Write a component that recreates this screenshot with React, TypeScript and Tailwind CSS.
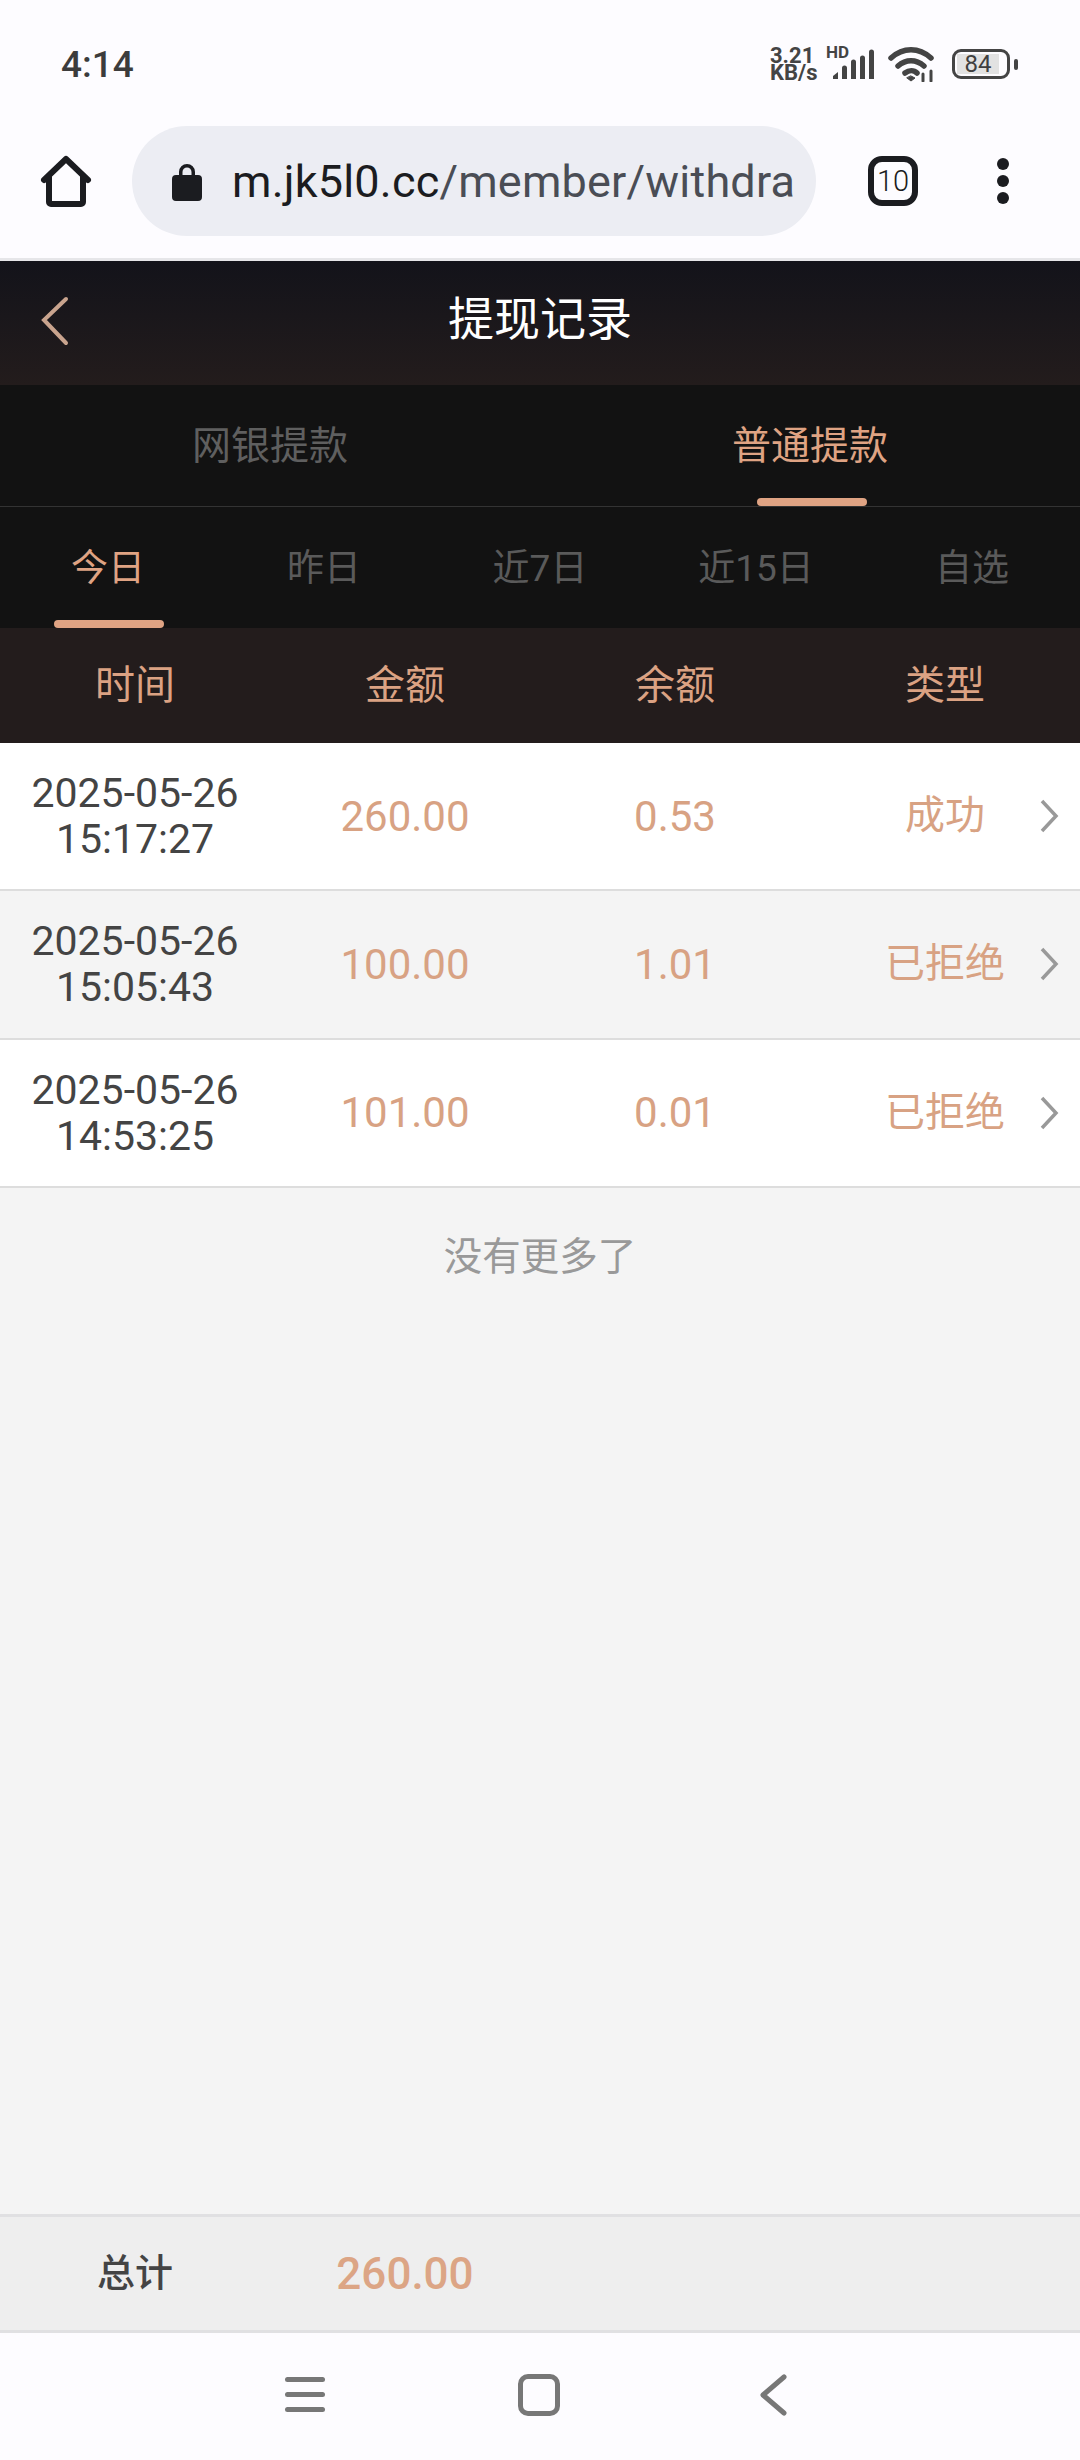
import React from 'react'

const records = [
	{ date: '2025-05-26', time: '15:17:27', amount: '260.00', balance: '0.53', status: '成功', bg: 'bg-white' },
	{ date: '2025-05-26', time: '15:05:43', amount: '100.00', balance: '1.01', status: '已拒绝', bg: 'bg-[#f4f4f4]' },
	{ date: '2025-05-26', time: '14:53:25', amount: '101.00', balance: '0.01', status: '已拒绝', bg: 'bg-white' },
]

const days = ['今日', '昨日', '近7日', '近15日', '自选']
const columns = ['时间', '金额', '余额', '类型']

function StatusBar() {
	return (
		<div className="h-[126px] pt-[2px] pl-[61px] flex items-center bg-[#fdfcff] text-[#3c3c3c]">
			<span className="text-[37px] font-medium leading-none">4:14</span>
			<div className="ml-auto mr-[62px] flex items-center">
				<div className="w-[52px] pl-[1px] text-[22px] font-bold leading-[17px] text-[#444]">
					<div>3.21</div>
					<div>KB/s</div>
				</div>
				<svg width="56" height="34" viewBox="0 0 56 34" className="ml-[2px]" fill="#444">
					<path d="M10 32v-3l5-4v7zM19 32v-11a2.500 2.500 0 0 1 5 0v11zM28 32v-17a2.500 2.500 0 0 1 5 0v17zM37 32v-21a2.500 2.500 0 0 1 5 0v21zM46 32v-27a2.500 2.500 0 0 1 5 0v27z" />
				</svg>
				<svg width="50" height="36" viewBox="0 0 50 36" className="ml-[9px]" fill="none" stroke="#444" strokeWidth="5.500" strokeLinecap="round">
					<path d="M3 12c12-11 28-11 40 0" />
					<path d="M10 20c8-7 18-7 26 0" />
					<path d="M17 27c4-3 9-3 12 0" />
					<path d="M19 32l4 3 4-3-4-2z" fill="#444" strokeWidth="1" />
					<path d="M35 35v-7M43 35v-10" strokeWidth="3" />
				</svg>
				<div className="ml-[14px] w-[58px] h-[30px] rounded-[9px] border-[3px] border-[#444] p-[2px] flex">
					<div className="w-[42px] bg-[#e2e2e2] text-[24px] leading-[20px] text-center text-[#3f3f3f]">84</div>
				</div>
				<div className="ml-[4px] w-[4px] h-[11px] rounded-full bg-[#444]" />
			</div>
			<span className="absolute left-[826px] top-[44px] text-[17px] font-bold leading-none text-[#444]">HD</span>
		</div>
	)
}

function BrowserBar() {
	return (
		<div className="h-[135px] bg-[#fdfcff] border-b-[3px] border-[#e6e6e9] flex items-start">
			<svg width="54" height="54" viewBox="0 0 54 54" className="ml-[39px] mt-[29px]" fill="none" stroke="#1b1c20" strokeWidth="6" strokeLinejoin="round" strokeLinecap="round">
				<path d="M5 25L27 4l22 21" />
				<path d="M10 22v25a2 2 0 0 0 2 2h30a2 2 0 0 0 2-2V22" />
			</svg>
			<div className="ml-[39px] w-[684px] h-[110px] rounded-full bg-[#ecedf3] flex items-center pl-[40px] pr-[24px]">
				<svg width="30" height="40" viewBox="0 0 30 40" fill="#1b1c20" className="shrink-0">
					<path d="M4 14h3v-3a8 8 0 0 1 16 0v3h3a4 4 0 0 1 4 4v18a4 4 0 0 1-4 4H4a4 4 0 0 1-4-4V18a4 4 0 0 1 4-4zM10.500 14h9v-3a4.500 4.500 0 0 0-9 0z" />
				</svg>
				<div className="ml-[30px] whitespace-nowrap text-[45px] tracking-[0.2px] leading-none">
					<span className="text-[#1b1c20]">m.jk5l0.cc</span>
					<span className="text-[#4a4d55]">/member/withdra</span>
				</div>
			</div>
			<div className="ml-[52px] mt-[30px] w-[50px] h-[50px] rounded-[14px] border-[6px] border-[#1b1c20] flex items-center justify-center text-[29px] font-light leading-none text-[#1b1c20]">
				10
			</div>
			<div className="ml-[79px] mt-[32px] flex flex-col gap-[5px]">
				<div className="w-[12px] h-[12px] rounded-full bg-[#1b1c20]" />
				<div className="w-[12px] h-[12px] rounded-full bg-[#1b1c20]" />
				<div className="w-[12px] h-[12px] rounded-full bg-[#1b1c20]" />
			</div>
		</div>
	)
}

function Chevron() {
	return (
		<svg width="20" height="34" viewBox="0 0 20 34" fill="none" stroke="#999" strokeWidth="3.500" className="absolute right-[21px] top-1/2 -translate-y-1/2">
			<path d="M3 2l14 15L3 32" />
		</svg>
	)
}

export default function App() {
	return (
		<div className="relative w-[1080px] h-[2460px] flex flex-col bg-[#f4f4f4] font-['Roboto','Noto_Sans_CJK_SC',sans-serif]">
			<StatusBar />
			<BrowserBar />

			<div className="h-[124px] bg-gradient-to-b from-[#13131a] to-[#231c1c] relative flex items-center justify-center pb-[8px]">
				<svg width="30" height="50" viewBox="0 0 30 50" fill="none" stroke="#c9a48e" strokeWidth="4" strokeLinecap="round" className="absolute left-[40px] top-[35px]">
					<path d="M26 3L4 24l22 23" />
				</svg>
				<span className="text-[46px] text-white">提现记录</span>
			</div>

			<div className="h-[122px] bg-[#121212] border-b border-[#333] grid grid-cols-2 text-[39px] text-center">
				<div className="pt-[2px] flex items-center justify-center text-[#5f5f5f]">网银提款</div>
				<div className="relative pt-[2px] flex items-center justify-center text-[#dfa383]">
					普通提款
					<div className="absolute bottom-0 left-[217px] w-[110px] h-[8px] rounded-full bg-[#dfa383]" />
				</div>
			</div>

			<div className="h-[121px] bg-[#121212] grid grid-cols-5 text-[37px]">
				{days.map((day, i) => (
					<div key={day} className={`relative pt-[2px] flex items-center justify-center ${i === 0 ? 'text-[#dfa383]' : 'text-[#5a5a5a]'}`}>
						{day}
						{i === 0 && <div className="absolute bottom-0 left-[54px] w-[110px] h-[8px] rounded-full bg-[#dfa383]" />}
					</div>
				))}
			</div>

			<div className="h-[115px] bg-[#231c1c] grid grid-cols-4 text-[40px] text-[#dba283]">
				{columns.map((col) => (
					<div key={col} className="flex items-center justify-center">{col}</div>
				))}
			</div>

			{records.map((r) => (
				<div key={r.time} className={`relative h-[148.300px] border-b-2 border-[#dddddd] grid grid-cols-4 items-center text-center text-[42px] text-[#d8a283] ${r.bg}`}>
					<div className="text-[41px] text-[#444] leading-[46px]">
						<div>{r.date}</div>
						<div>{r.time}</div>
					</div>
					<div>{r.amount}</div>
					<div>{r.balance}</div>
					<div className="text-[40px]">{r.status}</div>
					<Chevron />
				</div>
			))}

			<div className="h-[138px] flex items-center justify-center text-[38.500px] text-[#999]">没有更多了</div>

			<div className="flex-1" />

			<div className="h-[119px] bg-[#eeeeee] border-y-[3px] border-[#e0e0e2] grid grid-cols-4 items-center text-center">
				<div className="text-[38px] font-medium text-[#444]">总计</div>
				<div className="text-[44px] font-medium text-[#dca585]">260.00</div>
			</div>

			<div className="h-[127px] bg-[#fdfcff] flex items-center justify-center pb-[4px] pr-[9px]">
				<div className="w-[40px] flex flex-col gap-[10px] mr-[193px]">
					<div className="h-[5px] rounded-full bg-[#777]" />
					<div className="h-[5px] rounded-full bg-[#777]" />
					<div className="h-[5px] rounded-full bg-[#777]" />
				</div>
				<div className="w-[42px] h-[42px] rounded-[10px] border-[5px] border-[#777]" />
				<svg width="28" height="42" viewBox="0 0 28 42" fill="none" stroke="#777" strokeWidth="5" strokeLinecap="round" strokeLinejoin="round" className="ml-[199px]">
					<path d="M25 3L4 21l21 18" />
				</svg>
			</div>
		</div>
	)
}
